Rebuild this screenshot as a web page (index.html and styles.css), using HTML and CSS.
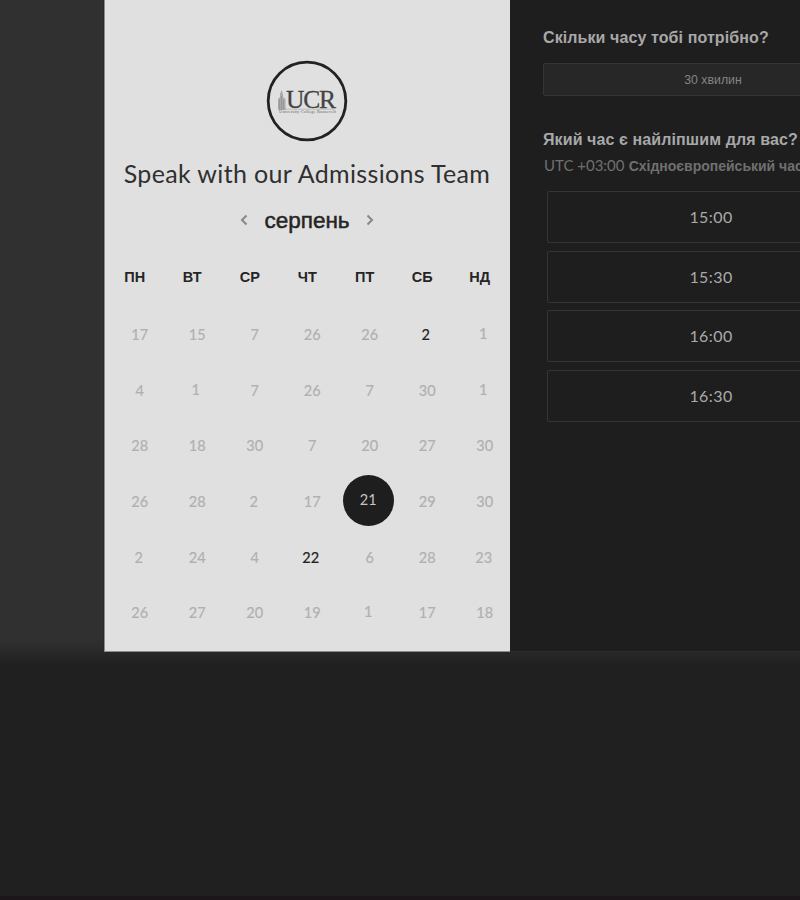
FILE: index.html
```
<!DOCTYPE html>
<html lang="uk">
<head>
<meta charset="utf-8">
<title>Speak with our Admissions Team</title>
<link rel="stylesheet" href="styles.css">
</head>
<body>
<main class="scheduler">
  <div class="gutter"></div>
  <section class="calendar">
    <svg class="logo" viewBox="0 0 82 82" width="82" height="82" role="img" aria-label="UCR">
      <circle cx="41" cy="41" r="38.8" fill="none" stroke="#222" stroke-width="2.8"/>
      <path d="M12 50V39l2-2v-3l1.500-4 1.500 4v3l2.500 2v11z" fill="#aaa"/>
      <path d="M13.500 40v9M15.500 36v13M17.500 40v9" stroke="#888" stroke-width=".6"/>
      <text class="logo-letters" x="20" y="47.500">UCR</text>
      <path d="M13 49.200h56" stroke="#999" stroke-width=".5"/>
      <text class="logo-caption" x="13" y="53" textLength="57">University College Roosevelt</text>
    </svg>
    <h1 class="title">Speak with our Admissions Team</h1>
    <div class="month">
      <svg width="8" height="12" viewBox="0 0 8 12"><path d="M6.500 1.500 2 6l4.500 4.500"/></svg>
      <span>серпень</span>
      <svg width="8" height="12" viewBox="0 0 8 12"><path d="M1.500 1.500 6 6l-4.500 4.500"/></svg>
    </div>
    <div class="weekdays">
      <span>ПН</span><span>ВТ</span><span>СР</span><span>ЧТ</span><span>ПТ</span><span>СБ</span><span>НД</span>
    </div>
    <div class="days">
      <span>17</span><span>15</span><span>7</span><span>26</span><span>26</span><span class="open">2</span><span class="one">1</span>
      <span>4</span><span class="one">1</span><span>7</span><span>26</span><span>7</span><span>30</span><span class="one">1</span>
      <span>28</span><span>18</span><span>30</span><span>7</span><span>20</span><span>27</span><span>30</span>
      <span>26</span><span>28</span><span class="low">2</span><span>17</span><span class="selected">21</span><span>29</span><span>30</span>
      <span class="low">2</span><span>24</span><span>4</span><span class="open">22</span><span>6</span><span>28</span><span class="low">23</span>
      <span>26</span><span>27</span><span>20</span><span>19</span><span class="one">1</span><span>17</span><span>18</span>
    </div>
  </section>
  <section class="times">
    <h2 class="question">Скільки часу тобі потрібно?</h2>
    <div class="duration">30 хвилин</div>
    <h2 class="question second">Який час є найліпшим для вас?</h2>
    <p class="zone"><span class="utc">UTC +03:00</span> <span class="zone-name">Східноєвропейський час</span></p>
    <div class="slots">
      <div class="slot">15:00</div>
      <div class="slot">15:30</div>
      <div class="slot">16:00</div>
      <div class="slot">16:30</div>
    </div>
  </section>
</main>
<div class="floor"></div>
</body>
</html>
```
FILE: styles.css
```
* { box-sizing: border-box; }
body {
  margin: 0;
  height: 900px;
  overflow: hidden;
  display: flex;
  flex-direction: column;
  background: #202020;
  border-bottom: 4px solid #1c1519;
  font-family: Lato, "Liberation Sans", sans-serif;
}
h1, h2, p { margin: 0; font-weight: 400; white-space: nowrap; }
.scheduler {
  flex: none;
  display: grid;
  grid-template-columns: 104px 406px 290px;
  height: 652px;
}
.gutter { background: linear-gradient(#303030 640px, #292929 652px); border-right: 1px solid #292929; }
.calendar {
  display: flex;
  flex-direction: column;
  align-items: center;
  background: #e0e0e0;
  border-left: 1px solid #8c8c8c;
  border-bottom: 1px solid #8c8c8c;
  padding: 60px 1px 0 0;
}
.logo { flex: none; display: block; }
.logo-letters { font: 25.500px "Liberation Serif", serif; letter-spacing: -1.200px; fill: #444; stroke: #444; stroke-width: .3px; }
.logo-caption { font: 4.500px "Liberation Serif", serif; fill: #666; }
.title { height: 32px; margin-top: 15px; line-height: 32px; font-size: 25px; letter-spacing: .35px; color: #303030; }
.month {
  display: flex;
  align-items: center;
  gap: 16px;
  height: 30px;
  margin-top: 17px;
  font-family: "Liberation Sans", sans-serif;
  font-size: 22.500px;
  color: #252525;
  -webkit-text-stroke: .5px #252525;
}
.month svg { margin-bottom: 2px; fill: none; stroke: #888; stroke-width: 2; }
.weekdays, .days { display: grid; grid-template-columns: repeat(7, 57.500px); text-align: center; }
.weekdays {
  align-self: flex-start;
  height: 20px;
  margin: 31px 0 0 1px;
  font: bold 14.500px/20px "Liberation Sans", sans-serif;
  color: #252525;
}
.days {
  align-self: flex-start;
  grid-template-rows: repeat(6, 55.600px);
  align-items: center;
  justify-items: center;
  margin: 20px 0 0 6px;
  font-size: 14.500px;
  -webkit-text-stroke: .2px;
  color: #b0b0b0;
}
.days .open { color: #222; margin-right: 3px; }
.days .one { margin: 0 3px 2px 0; }
.days .low { margin-right: 2px; }
.days .selected {
  width: 51px;
  height: 51px;
  margin: 0 3px 3px 0;
  border-radius: 50%;
  line-height: 50px;
  background: #1e1e1e;
  color: #c4c4c4;
  -webkit-text-stroke: 0;
}
.times { overflow: hidden; padding: 27px 0 0 33px; background: #1e1e1e; border-bottom: 1px solid #2b2b2b; }
.question { font: bold 16px/22px "Liberation Sans", sans-serif; letter-spacing: .1px; color: #a8a8a8; }
.second { margin-top: 33px; }
.duration {
  width: 340px;
  height: 33px;
  margin-top: 14px;
  border: 1px solid #353535;
  border-radius: 2px;
  background: #272727;
  text-align: center;
  font: 12.300px/32px "Liberation Sans", sans-serif;
  color: #858585;
}
.zone { height: 22px; margin: 3px 0 0 1px; line-height: 22px; color: #707070; }
.utc { font-size: 15px; }
.zone-name { font: bold 14px "Liberation Sans", sans-serif; }
.slots { display: grid; grid-template-columns: 328px; gap: 7.700px; margin: 15px 0 0 4px; }
.slot {
  height: 52px;
  border: 1px solid #353535;
  border-radius: 2px;
  text-align: center;
  line-height: 49px;
  font-size: 16px;
  letter-spacing: .4px;
  color: #aaa;
}
.floor { flex: none; height: 14px; background: linear-gradient(#282828, #202020); }
```
